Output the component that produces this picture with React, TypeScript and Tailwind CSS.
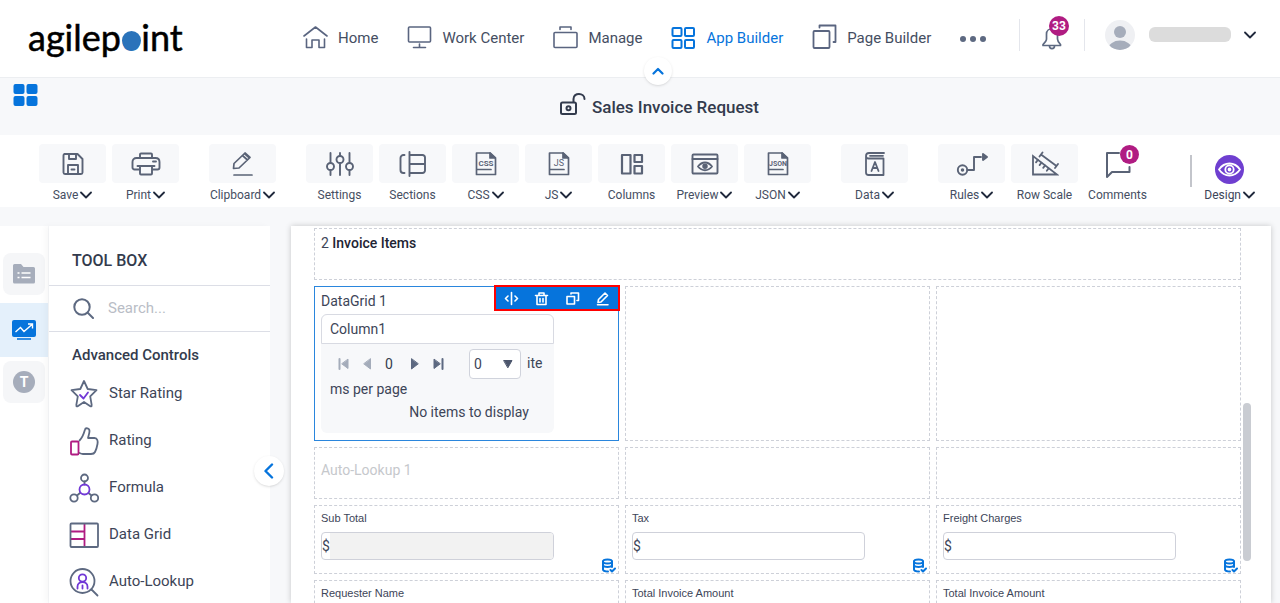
import React from 'react';
import clsx from 'clsx';

type IconProps = {
  w: number;
  h: number;
  stroke?: string;
  sw?: number;
  className?: string;
  children: React.ReactNode;
};

function Svg({ w, h, stroke = 'currentColor', sw = 2, className, children }: IconProps) {
  return (
    <svg
      width={w}
      height={h}
      viewBox={`0 0 ${w} ${h}`}
      fill="none"
      stroke={stroke}
      strokeWidth={sw}
      strokeLinecap="round"
      strokeLinejoin="round"
      className={clsx('shrink-0', className)}
      aria-hidden="true"
    >
      {children}
    </svg>
  );
}

const Chevron = () => (
  <Svg w={12} h={8} sw={1.8} className="text-[#20293c]">
    <path d="M1 1.500l5 5 5-5" />
  </Svg>
);

const navItems = [
  {
    label: 'Home',
    icon: (
      <Svg w={25} h={24} sw={1.6}>
        <path d="M1 11L12.500 2 24 11M3.500 14v8.500h5.500v-7.500h7v7.500h5.500V14" />
      </Svg>
    ),
  },
  {
    label: 'Work Center',
    icon: (
      <Svg w={25} h={24} sw={1.6}>
        <rect x="1.500" y="2" width="22" height="15" rx="1" />
        <path d="M12.500 19v3M6.500 22.500h12" />
      </Svg>
    ),
  },
  {
    label: 'Manage',
    icon: (
      <Svg w={25} h={24} sw={1.6}>
        <rect x="1" y="7.500" width="23" height="15" rx="1" />
        <path d="M7 4.500V2h11v2.500" />
      </Svg>
    ),
  },
  {
    label: 'App Builder',
    active: true,
    icon: (
      <Svg w={25} h={24} sw={2}>
        <rect x="1.500" y="3" width="9" height="8" rx="1" />
        <rect x="14" y="3" width="9" height="8" rx="1" />
        <rect x="1.500" y="15" width="9" height="8" rx="1" />
        <rect x="14" y="15" width="9" height="8" rx="1" />
      </Svg>
    ),
  },
  {
    label: 'Page Builder',
    icon: (
      <Svg w={25} h={25} sw={1.8}>
        <rect x="1.500" y="7" width="16" height="17" rx="1" />
        <path d="M7.500 3.500V1.500H23.500V18h-2" />
      </Svg>
    ),
  },
];

function FileIcon({ text, size }: { text: string; size: string }) {
  return (
    <Svg w={24} h={26} sw={1.7}>
      <path d="M2.500 2H16l5.500 5v16.500h-19z" />
      <path d="M16 2v5h5z" fill="currentColor" />
      <path d="M3 18.500h14" />
      <text
        x="12"
        y="15"
        textAnchor="middle"
        fill="currentColor"
        stroke="none"
        className={clsx('font-[Roboto,sans-serif]', size)}
      >
        {text}
      </text>
    </Svg>
  );
}

type Tool = { label: string; menu?: boolean; icon: React.ReactNode; plain?: boolean; badge?: string };

const toolGroups: Tool[][] = [
  [
    {
      label: 'Save',
      menu: true,
      icon: (
        <Svg w={24} h={24} sw={1.9}>
          <path d="M3.500 2h13l5 5v13.500a1.500 1.500 0 0 1-1.500 1.500H4a1.500 1.500 0 0 1-1.500-1.500V3.500A1.500 1.500 0 0 1 3.500 2z" />
          <path d="M8 2v5h7V2M7 22v-9h10v9M10.500 17.500h3" />
        </Svg>
      ),
    },
    {
      label: 'Print',
      menu: true,
      icon: (
        <Svg w={30} h={24} sw={1.9}>
          <path d="M9 6V2.500a1 1 0 0 1 1-1h10a1 1 0 0 1 1 1V6" />
          <path d="M8 17.500H3.500a2 2 0 0 1-2-2V10c0-2.500 1.500-4 4-4h19c2.500 0 4 1.500 4 4v5.500a2 2 0 0 1-2 2H22" />
          <path d="M6.500 14h17M9 14v7.500a1 1 0 0 0 1 1h10a1 1 0 0 0 1-1V14M22 9.500h3" />
        </Svg>
      ),
    },
  ],
  [
    {
      label: 'Clipboard',
      menu: true,
      icon: (
        <Svg w={24} h={26} sw={1.7}>
          <path d="M2.500 17.500l.5-5L14 2l5 4.500L8 17l-5.500.5zM11.500 4.500l5 4.500M13.500 2.500l5 4.500M3 24h18" />
        </Svg>
      ),
    },
  ],
  [
    {
      label: 'Settings',
      icon: (
        <Svg w={28} h={24} sw={1.9}>
          <path d="M4.500 1v9.500M4.500 18.500V23M14 1v3M14 11.500V23M23.500 1v9.500M23.500 18.500V23" />
          <circle cx="4.500" cy="14.500" r="3.500" />
          <circle cx="14" cy="7.500" r="3.500" />
          <circle cx="23.500" cy="14.500" r="3.500" />
        </Svg>
      ),
    },
    {
      label: 'Sections',
      icon: (
        <Svg w={28} h={26} sw={1.9}>
          <path d="M5.500 4H4.500A3 3 0 0 0 1.500 7v12a3 3 0 0 0 3 3h1M10.500 1v24M11 4h12.500A2.500 2.500 0 0 1 26 6.500v13a2.500 2.500 0 0 1-2.500 2.500H11M11 13h15" />
        </Svg>
      ),
    },
    { label: 'CSS', menu: true, icon: <FileIcon text="CSS" size="text-[8px] font-bold" /> },
    { label: 'JS', menu: true, icon: <FileIcon text="JS" size="text-[9px]" /> },
    {
      label: 'Columns',
      icon: (
        <Svg w={24} h={24} sw={2.2}>
          <path d="M2 3h8.500v18.500H2zM14.500 3H22v7h-7.500zM14.500 14H22v7.500h-7.500z" />
        </Svg>
      ),
    },
    {
      label: 'Preview',
      menu: true,
      icon: (
        <Svg w={28} h={24} sw={1.9}>
          <rect x="1.500" y="2.500" width="25" height="19" rx="1" />
          <path d="M1.500 7h25" />
          <path d="M7 14.500c4-5.300 10-5.300 14 0-4 5-10 5-14 0z" />
          <circle cx="14" cy="14.300" r="1.800" fill="currentColor" />
        </Svg>
      ),
    },
    { label: 'JSON', menu: true, icon: <FileIcon text="JSON" size="text-[7px] font-bold" /> },
  ],
  [
    {
      label: 'Data',
      menu: true,
      icon: (
        <Svg w={24} h={26} sw={1.8}>
          <path d="M21 2H6a3 3 0 0 0-3 3v16.500A2.500 2.500 0 0 0 5.500 24H20.500V7.500H5.500A2.500 2.500 0 0 1 3 5M7 4.800h13" />
          <path d="M8.500 20l3.500-9 3.500 9M10 17h4" />
        </Svg>
      ),
    },
  ],
  [
    {
      label: 'Rules',
      menu: true,
      icon: (
        <Svg w={32} h={26} sw={1.9}>
          <circle cx="6.500" cy="19" r="4.700" />
          <circle cx="6.500" cy="19" r="0.800" fill="currentColor" />
          <path d="M11.500 19H18V6h7" />
          <path d="M27 3l4 3-4 3z" fill="currentColor" />
        </Svg>
      ),
    },
    {
      label: 'Row Scale',
      icon: (
        <Svg w={28} h={26} sw={1.8}>
          <path d="M2 5v18.500h24z" strokeLinejoin="miter" />
          <path d="M6.800 9l-1.800 2.400M10.400 11.700l-1.800 2.400M14 14.500l-1.800 2.400M17.600 17.400l-1.800 2.400" />
          <path d="M10 3.500l15.500 11.500M8.500 5.500l3-4M24 17l3-4" />
        </Svg>
      ),
    },
    {
      label: 'Comments',
      plain: true,
      badge: '0',
      icon: (
        <Svg w={26} h={28} sw={2}>
          <path d="M14 3H2v24l5-5h17.500v-5" />
        </Svg>
      ),
    },
  ],
];

function ToolButton({ tool }: { tool: Tool }) {
  return (
    <button className="flex w-[67px] flex-col items-center text-[#5a6376]">
      <span
        className={clsx(
          'relative flex h-[39px] w-full items-center justify-center rounded-sm',
          !tool.plain && 'bg-[#f7f8fa]',
        )}
      >
        {tool.icon}
        {tool.badge && (
          <span className="absolute top-px right-3 flex size-[19px] items-center justify-center rounded-full bg-[#b01c82] text-xs font-bold text-white">
            {tool.badge}
          </span>
        )}
      </span>
      <span className="mt-1 flex h-4 items-center gap-0.5 text-xs whitespace-nowrap text-[#454e62]">
        {tool.label}
        {tool.menu && <Chevron />}
      </span>
    </button>
  );
}

const controls = [
  {
    label: 'Star Rating',
    icon: (
      <Svg w={30} h={30} sw={1.8} stroke="#5d6981">
        <path d="M15 2l3.700 8 8.800 1.200-6.300 6.200 1.500 8.800c.2 1-.5 1.500-1.400 1L15 23l-6.300 4.200c-.9.500-1.600 0-1.400-1l1.500-8.800-6.300-6.200L11.300 10z" />
        <path d="M11 16l3.500 3.500L19 13.500" stroke="#7138d6" />
      </Svg>
    ),
  },
  {
    label: 'Rating',
    icon: (
      <Svg w={30} h={30} sw={1.8} stroke="#5d6981">
        <path d="M10.500 14.500C14 11 15 7 16 3.500c.5-2 4.500-1.500 4.500 1.500 0 2.500-1 5-1.500 7h6.500c3 0 3.500 3.500 3 6-.5 3-1.500 6-2.500 8-.7 1.500-2 2-4 2h-8c-1.500 0-2.500-.5-3.500-1" />
        <rect x="2" y="15.500" width="7.500" height="13" rx="1" stroke="#b01c82" />
      </Svg>
    ),
  },
  {
    label: 'Formula',
    icon: (
      <Svg w={30} h={30} sw={1.8} stroke="#5d6981">
        <circle cx="15.500" cy="5" r="3.500" />
        <circle cx="5" cy="25" r="3.700" />
        <circle cx="25.500" cy="25" r="3.700" />
        <path d="M15.500 8.500v3M8 22.500l3-2.500M22.500 22.500l-3-2.500" />
        <circle cx="15.500" cy="16.500" r="5" stroke="#7138d6" />
      </Svg>
    ),
  },
  {
    label: 'Data Grid',
    icon: (
      <Svg w={30} h={30} sw={1.8} stroke="#5d6981">
        <path d="M2 11.500h13M2 19h13M15.500 4v23" stroke="#b01c82" />
        <rect x="1.500" y="3.500" width="27.500" height="23.500" rx="1" />
      </Svg>
    ),
  },
  {
    label: 'Auto-Lookup',
    icon: (
      <Svg w={30} h={30} sw={1.8} stroke="#5d6981">
        <circle cx="13.500" cy="14" r="12" />
        <path d="M22.500 22.500l6 6" />
        <circle cx="13.500" cy="11" r="3.700" stroke="#7138d6" />
        <path d="M8.500 21.500v-2c0-6 10-6 10 0v2M13.500 18.500v3" stroke="#7138d6" />
      </Svg>
    ),
  },
];

function DbIcon() {
  return (
    <Svg w={15} h={15} sw={2} className="absolute right-0.5 bottom-0 text-[#0674dc]">
      <ellipse cx="6.500" cy="3.500" rx="4.500" ry="2" />
      <path d="M2 3.500v8c0 1 2 2 5 2M11 3.500V9M2 7.500c1.500 2 7.500 2 9 0" />
      <path d="M9.500 12l1.500 1.500 3-3" />
    </Svg>
  );
}

function Cell({ className, children }: { className?: string; children?: React.ReactNode }) {
  return (
    <div className={clsx('relative border border-dashed border-[#cdd0d8] px-1.5', className)}>{children}</div>
  );
}

function MoneyField({ id, label, disabled }: { id: string; label: string; disabled?: boolean }) {
  return (
    <Cell className="pt-1 pb-[13px]">
      <label htmlFor={id} className="block font-['Liberation_Sans',sans-serif] text-[11px] leading-4">
        {label}
      </label>
      <div className="mt-1.5 flex h-7 w-4/5 items-center overflow-hidden rounded-sm border border-[#cfd1da] text-sm">
        <span>$</span>
        <input
          id={id}
          disabled={disabled}
          className={clsx('h-full min-w-0 flex-1 outline-none', disabled && 'bg-[#f2f2f2]')}
        />
      </div>
      <DbIcon />
    </Cell>
  );
}

const cellActions = [
  {
    label: 'Resize',
    icon: <path d="M7.500 1.500v12M4 5L1.500 7.500 4 10M11 5l2.500 2.500L11 10" />,
  },
  {
    label: 'Delete',
    icon: <path d="M1.500 4.500h12M5 4V2h5v2M3 5v8.500h9V5M6 7.500v3.500M9 7.500v3.500" />,
  },
  {
    label: 'Copy',
    icon: <path d="M2 5.500h7.500v7.500H2zM6 3V2h7.500v7.500H12" />,
  },
  {
    label: 'Edit',
    icon: <path d="M3 11.500l.5-3 6.500-6.500 2.500 2.500L6 11zM2.500 13.700h10.500" />,
  },
];

function DataGridCell() {
  return (
    <div className="relative border border-[#2a86dd] px-1.5 pt-1 pb-[7px] text-sm">
      <div className="leading-5">DataGrid 1</div>
      <div className="absolute -top-0.5 -right-0.5 flex h-[26px] w-[126px] items-center justify-around border-2 border-[#f00] bg-[#0674dc] text-white">
        {cellActions.map(a => (
          <button key={a.label} aria-label={a.label}>
            <Svg w={15} h={15} sw={1.6}>
              {a.icon}
            </Svg>
          </button>
        ))}
      </div>
      <div className="mt-[3px] w-4/5 rounded-md bg-[#f7f8fa]">
        <div className="rounded-t-md border border-[#d8dae2] bg-white">
          <table className="w-full">
            <thead>
              <tr>
                <th className="px-2 py-1 text-left font-normal leading-5">Column1</th>
              </tr>
            </thead>
          </table>
        </div>
        <div className="pt-[5px] pr-2 pb-[11px] pl-[9px] leading-5 break-all">
          <span className="inline-flex h-[30px] w-[139px] items-center pl-2 align-middle">
            <span className="flex items-center gap-[14px] text-[#5d6981]">
              <button aria-label="First page" className="text-[#a4acba]">
                <Svg w={11} h={12} sw={2}>
                  <path d="M1.500 1v10" />
                  <path d="M10 1.500v9L4 6z" fill="currentColor" strokeWidth="1" />
                </Svg>
              </button>
              <button aria-label="Previous page" className="text-[#a4acba]">
                <Svg w={8} h={12} sw={1}>
                  <path d="M7.500 1v10L1 6z" fill="currentColor" />
                </Svg>
              </button>
              <span className="text-[#333b4d]">0</span>
              <button aria-label="Next page" className="ml-1">
                <Svg w={8} h={12} sw={1}>
                  <path d="M.5 1v10L7 6z" fill="currentColor" />
                </Svg>
              </button>
              <button aria-label="Last page">
                <Svg w={11} h={12} sw={2}>
                  <path d="M9.500 1v10" />
                  <path d="M1 1.500v9L7 6z" fill="currentColor" strokeWidth="1" />
                </Svg>
              </button>
            </span>
          </span>
          <span className="relative mr-1.5 inline-block h-[30px] w-[52px] align-middle">
            <select
              aria-label="Page size"
              className="h-full w-full appearance-none rounded-sm border border-[#d0d3dc] bg-white pl-1 text-sm"
            >
              <option>0</option>
            </select>
            <Svg w={10} h={8} sw={1} className="pointer-events-none absolute top-[11px] right-2 text-[#4c566c]">
              <path d="M1 .5h8L5 7.500z" fill="currentColor" />
            </Svg>
          </span>
          items per page
          <div className="mt-[3px] pr-[17px] text-right">No items to display</div>
        </div>
      </div>
    </div>
  );
}

function Header() {
  return (
    <header className="relative z-10 flex h-[78px] shrink-0 items-center border-b border-[#eceef1] bg-white pr-6 pl-7">
      <a
        href="#"
        aria-label="agilepoint"
        className="flex w-[155px] items-baseline pb-1 font-[Lato,sans-serif] text-4xl leading-[48px] text-black"
      >
        <span className="[-webkit-text-stroke:0.5px]">agilep</span>
        <span className="relative text-[#2a73ba]">
          o
          <span className="absolute bottom-[11px] left-px size-[19px] rounded-full bg-[#2a73ba]" />
        </span>
        <span className="[-webkit-text-stroke:0.5px]">int</span>
      </a>
      <nav className="ml-[120px] flex items-center gap-[29px]">
        {navItems.map(item => (
          <a
            key={item.label}
            href="#"
            className={clsx(
              'flex items-center gap-2.5 whitespace-nowrap',
              item.active ? 'text-[#0674dc]' : 'text-[#5a6580]',
            )}
          >
            <span className="pb-1">{item.icon}</span>
            <span className={clsx('text-[15px]', !item.active && 'text-[#454e62]')}>{item.label}</span>
          </a>
        ))}
        <button aria-label="More" className="text-[#5d6981]">
          <svg width="26" height="6" viewBox="0 0 26 6" fill="currentColor">
            <circle cx="3" cy="3" r="3" />
            <circle cx="13" cy="3" r="3" />
            <circle cx="23" cy="3" r="3" />
          </svg>
        </button>
      </nav>
      <div className="ml-auto flex items-center pb-2">
        <div className="flex h-8 items-center border-x border-[#e4e6ec] px-[21px]">
          <button aria-label="Notifications" className="relative mt-1 text-[#5d6981]">
            <Svg w={22} h={26} sw={1.7}>
              <path d="M5.500 10c0-7 11-7 11 0v5c0 2 1 3.500 3 5.500v1H2v-1c2-2 3.500-3.500 3.500-5.500z" />
              <path d="M8.500 22c0 3.500 5 3.500 5 0" />
            </Svg>
            <span className="absolute -top-2 left-2 flex size-5 items-center justify-center rounded-full bg-[#b01c82] text-xs font-bold text-white">
              33
            </span>
          </button>
        </div>
        <svg width="30" height="30" viewBox="0 0 30 30" className="ml-5" aria-hidden="true">
          <clipPath id="avatar">
            <circle cx="15" cy="15" r="15" />
          </clipPath>
          <g clipPath="url(#avatar)">
            <rect width="30" height="30" fill="#eff0f3" />
            <circle cx="15" cy="12" r="6" fill="#a6adbb" />
            <ellipse cx="15" cy="29" rx="11.500" ry="8.500" fill="#a6adbb" />
          </g>
        </svg>
        <div className="ml-3.5 h-[15px] w-[82px] rounded-md bg-[#dcdcdc]" />
        <button aria-label="Account menu" className="ml-[13px]">
          <Chevron />
        </button>
      </div>
      <div className="pointer-events-none absolute -bottom-2 left-0 flex w-full justify-center pl-9">
        <button
          aria-label="Collapse header"
          className="pointer-events-auto flex size-7 items-center justify-center rounded-full bg-white text-[#0674dc] shadow"
        >
          <Svg w={12} h={8} sw={2.2}>
            <path d="M1.500 6.500L6 2l4.500 4.500" />
          </Svg>
        </button>
      </div>
    </header>
  );
}

function SideRail() {
  return (
    <aside className="flex w-12 shrink-0 flex-col items-center bg-white pt-[27px]">
      <button
        aria-label="Data model"
        className="flex size-[42px] items-center justify-center rounded-lg bg-[#f5f6f8]"
      >
        <svg width="22" height="20" viewBox="0 0 22 20">
          <path
            d="M0 1.500A1.500 1.500 0 0 1 1.500 0H8l2.500 3H20.500A1.500 1.500 0 0 1 22 4.500V18a1.500 1.500 0 0 1-1.500 1.500h-19A1.500 1.500 0 0 1 0 18z"
            fill="#a6adbb"
          />
          <path d="M4.500 9h2M8.500 9h9M4.500 13.500h2M8.500 13.500h9" stroke="#fff" strokeWidth="1.600" />
        </svg>
      </button>
      <button
        aria-label="Advanced controls"
        className="mt-2 flex h-[54px] w-full items-center justify-center bg-[#e4f0fb]"
      >
        <svg width="24" height="20" viewBox="0 0 24 20" fill="none">
          <rect width="24" height="17" rx="2" fill="#0674dc" />
          <path d="M3.500 12l5-4.500 3.500 4 8-7M16 4h4.500v4.500" stroke="#fff" strokeWidth="1.400" />
          <path d="M5 19h14" stroke="#0674dc" strokeWidth="1.600" />
        </svg>
      </button>
      <button
        aria-label="Text controls"
        className="mt-1 flex size-[42px] items-center justify-center rounded-lg bg-[#f5f6f8]"
      >
        <span className="flex size-[22px] items-center justify-center rounded-full bg-[#a6adbb] text-sm font-bold text-white">
          T
        </span>
      </button>
    </aside>
  );
}

function ToolBox() {
  return (
    <section className="relative ml-px w-[221px] shrink-0 bg-white text-[15px] shadow-[-4px_0_6px_rgba(0,0,0,0.03)]">
      <h2 className="border-b border-[#dcdee6] pt-[23px] pb-3 pl-[23px] text-base font-medium text-[#333b4d]">
        TOOL BOX
      </h2>
      <div className="flex h-[46px] items-center gap-3.5 border-b border-[#dcdee6] pl-6">
        <Svg w={21} h={21} sw={2} stroke="#5d6981">
          <circle cx="9" cy="9" r="7.700" />
          <path d="M15 15l5 5" />
        </Svg>
        <input
          aria-label="Search controls"
          placeholder="Search..."
          className="w-36 outline-none placeholder:text-[#b9bdc6]"
        />
      </div>
      <h3 className="pt-[11px] pl-[23px] leading-6 font-medium text-[#333b4d]">Advanced Controls</h3>
      <ul className="mt-[3px]">
        {controls.map(c => (
          <li key={c.label} className="flex h-[47px] items-center gap-2.5 pl-5">
            {c.icon}
            <span>{c.label}</span>
          </li>
        ))}
      </ul>
      <button
        aria-label="Collapse tool box"
        className="absolute top-[230px] -right-3.5 z-10 flex size-[30px] items-center justify-center rounded-full bg-white text-[#0674dc] shadow"
      >
        <Svg w={10} h={16} sw={2.4}>
          <path d="M8 1.500L1.500 8 8 14.500" />
        </Svg>
      </button>
    </section>
  );
}

function Canvas() {
  return (
    <main className="relative mr-[9px] ml-[21px] min-w-0 flex-1 overflow-hidden bg-white pt-0.5 pr-[30px] pl-[23px] shadow-[0_0_6px_rgba(0,0,0,0.2)]">
      <div className="grid grid-cols-3 gap-1.5">
        <Cell className="col-span-3 h-[52px] pt-1 text-sm leading-5">
          2 <span className="font-medium text-[#1e2433]">Invoice Items</span>
        </Cell>
        <DataGridCell />
        <Cell />
        <Cell />
        <Cell className="h-[52px] pt-3 text-sm leading-5 text-[#c6c8cc]">Auto-Lookup 1</Cell>
        <Cell />
        <Cell />
        <MoneyField id="sub-total" label="Sub Total" disabled />
        <MoneyField id="tax" label="Tax" />
        <MoneyField id="freight" label="Freight Charges" />
        {['Requester Name', 'Total Invoice Amount', 'Total Invoice Amount'].map((label, i) => (
          <Cell key={i} className="h-[70px] pt-1 font-['Liberation_Sans',sans-serif] text-[11px] leading-4">
            {label}
          </Cell>
        ))}
      </div>
      <div className="absolute top-[177px] right-5 h-[158px] w-2 rounded-full bg-[#c9ccd2]" />
    </main>
  );
}

export default function App() {
  return (
    <div className="flex h-screen flex-col overflow-hidden bg-[#f7f8fa] font-[Roboto,sans-serif] text-base text-[#3d4558]">
      <Header />

      <div className="flex h-[57px] shrink-0 items-start pt-1.5 pl-3">
        <button aria-label="All apps" className="text-[#0674dc]">
          <svg width="26" height="22" viewBox="0 0 26 22" fill="currentColor">
            <rect x="1.500" width="11" height="10" rx="2" />
            <rect x="14.500" width="11" height="10" rx="2" />
            <rect x="1.500" y="12" width="11" height="10" rx="2" />
            <rect x="14.500" y="12" width="11" height="10" rx="2" />
          </svg>
        </button>
        <h1 className="flex flex-1 items-center justify-center gap-1.5 pt-2 text-[17px] leading-7 font-medium text-[#333b4d]">
          <Svg w={27} h={24} sw={2} className="mb-1.5">
            <rect x="2" y="10.500" width="15" height="11.500" rx="1.500" />
            <circle cx="9.500" cy="16.200" r="2" />
            <path d="M14.500 10V7c0-7 11-6.500 11 0" />
          </Svg>
          Sales Invoice Request
        </h1>
      </div>

      <div className="flex h-[72px] shrink-0 items-start bg-white pt-[9px] pr-[25px] pl-[39px]">
        <div className="flex gap-[30px]">
          {toolGroups.map((group, i) => (
            <div key={i} className="flex gap-1.5">
              {group.map(tool => (
                <ToolButton key={tool.label} tool={tool} />
              ))}
            </div>
          ))}
        </div>
        <div className="mt-[11px] mr-3 ml-auto h-8 w-0.5 bg-[#c3c5cb]" />
        <button className="flex flex-col items-center">
          <span className="mt-[11px] flex size-[29px] items-center justify-center rounded-full bg-[#6f3fd0] text-white">
            <Svg w={23} h={15} sw={1.8}>
              <path d="M1 7.500c5.500-8 15.500-8 21 0-5.500 8-15.500 8-21 0z" />
              <circle cx="11.500" cy="7.500" r="4.200" />
              <circle cx="11.500" cy="7.500" r="1" fill="currentColor" />
            </Svg>
          </span>
          <span className="mt-[3px] flex h-4 items-center gap-0.5 text-xs">
            Design
            <Chevron />
          </span>
        </button>
      </div>

      <div className="flex min-h-0 flex-1 pt-[19px]">
        <SideRail />
        <ToolBox />
        <Canvas />
      </div>
    </div>
  );
}
